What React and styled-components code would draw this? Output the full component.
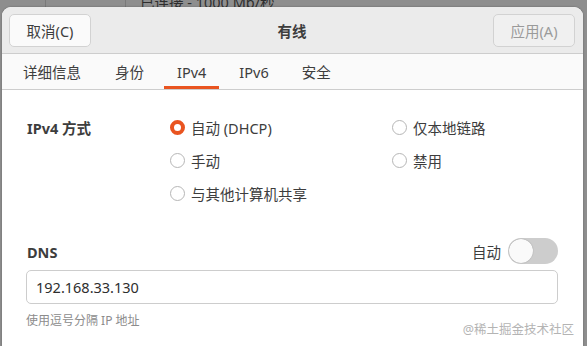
import styled, { createGlobalStyle } from "styled-components";

const GlobalStyle = createGlobalStyle`
  html, body {
    margin: 0;
    padding: 0;
  }
  body {
    font-family: "Noto Sans", "Noto Sans CJK SC", sans-serif;
    color: #3d3d3d;
  }
`;

const Desktop = styled.div`
  position: relative;
  width: 587px;
  height: 346px;
  overflow: hidden;
  background: #8e8e8e;
  padding: 7px 4px 0 2px;
  box-sizing: border-box;
`;

// bits of the window lying behind the dialog
const BehindText = styled.div`
  position: absolute;
  top: -9px;
  left: 140px;
  font-size: 14.5px;
  color: #2e2e2e;
`;

const BehindLine = styled.div`
  position: absolute;
  top: 0;
  left: ${(p) => p.$x}px;
  width: 1px;
  height: 7px;
  background: #7a7a7a;
`;

const Dialog = styled.div`
  position: relative;
  height: 100%;
  display: flex;
  flex-direction: column;
  background: #ffffff;
  border-radius: 9px 9px 0 0;
  overflow: hidden;
  box-shadow: 0 0 2px rgba(0, 0, 0, 0.35);
`;

const Header = styled.div`
  height: 46px;
  display: flex;
  align-items: center;
  justify-content: space-between;
  padding: 0 8px 0 7px;
  background: #ebebeb;
  border-bottom: 1px solid #cdcdcd;
`;

const HeadButton = styled.div`
  width: 82px;
  height: 33px;
  box-sizing: border-box;
  display: flex;
  align-items: center;
  justify-content: center;
  border: 1px solid #d2d2d2;
  border-radius: 5px;
  background: ${(p) => (p.$disabled ? "#f0f0f0" : "#fafafa")};
  color: ${(p) => (p.$disabled ? "#9a9a9a" : "#3d3d3d")};
  font-size: 14.5px;
`;

const Title = styled.div`
  font-size: 14.5px;
  font-weight: bold;
  color: #3d3d3d;
`;

const Tabs = styled.div`
  height: 35px;
  display: flex;
  align-items: stretch;
  padding-left: 7px;
  background: #fafafa;
  border-bottom: 1px solid #cdcdcd;
`;

const Tab = styled.div`
  position: relative;
  display: flex;
  align-items: center;
  padding: 0 ${(p) => p.$pad || 14}px;
  font-size: 14.5px;
  color: #3d3d3d;
  box-shadow: ${(p) => (p.$active ? "inset 0 -3px 0 #e95420" : "none")};
`;

const Content = styled.div`
  flex: 1;
  padding: 26px 25px 0 24px;
  display: flex;
  flex-direction: column;
`;

const MethodRow = styled.div`
  display: grid;
  grid-template-columns: 144px 222px 1fr;
`;

const Label = styled.div`
  font-weight: bold;
  font-size: 14.5px;
  color: #3d3d3d;
  line-height: 22px;
  padding-top: 1px;
  padding-left: 1px;
`;

const RadioCol = styled.div`
  display: flex;
  flex-direction: column;
  gap: 10px;
`;

const RadioRow = styled.div`
  display: flex;
  align-items: center;
  gap: 6px;
  height: 23px;
  font-size: 14.5px;
  color: #3d3d3d;
`;

const RadioDot = styled.span`
  width: 15px;
  height: 15px;
  box-sizing: border-box;
  border-radius: 50%;
  border: ${(p) => (p.$on ? "4px solid #e95420" : "1px solid #b6b6b6")};
  background: #fff;
`;

const DnsHead = styled.div`
  margin-top: 33px;
  display: flex;
  align-items: center;
  justify-content: space-between;
  height: 26px;
`;

const AutoWrap = styled.div`
  display: flex;
  align-items: center;
  gap: 7px;
  font-size: 14.5px;
  color: #3d3d3d;
`;

const Switch = styled.div`
  width: 50px;
  height: 26px;
  border-radius: 13px;
  background: #cdcdcd;
  display: flex;
  align-items: center;
  padding: 1px;
  box-sizing: border-box;
`;

const Knob = styled.span`
  width: 24px;
  height: 24px;
  border-radius: 50%;
  background: #fafafa;
  box-shadow: 0 0 1px rgba(0, 0, 0, 0.4);
`;

const Input = styled.div`
  margin-top: 6px;
  height: 34px;
  box-sizing: border-box;
  border: 1px solid #cdcdcd;
  border-radius: 5px;
  display: flex;
  align-items: center;
  padding-left: 9px;
  font-size: 14.5px;
  color: #2e2e2e;
`;

const Hint = styled.div`
  margin-top: 7px;
  font-size: 12px;
  color: #8c8c8c;
`;

const Watermark = styled.div`
  position: absolute;
  right: 9px;
  bottom: 8px;
  font-size: 12.5px;
  color: #b4b4b4;
`;

export default function App() {
  return (
    <>
      <GlobalStyle />
      <Desktop>
        <BehindLine $x={45} />
        <BehindLine $x={125} />
        <BehindText>已连接 - 1000 Mb/秒</BehindText>
        <Dialog>
          <Header>
            <HeadButton>取消(C)</HeadButton>
            <Title>有线</Title>
            <HeadButton $disabled>应用(A)</HeadButton>
          </Header>
          <Tabs>
            <Tab>详细信息</Tab>
            <Tab $pad={20}>身份</Tab>
            <Tab $active $pad={13}>IPv4</Tab>
            <Tab $pad={20}>IPv6</Tab>
            <Tab $pad={13}>安全</Tab>
          </Tabs>
          <Content>
            <MethodRow>
              <Label>IPv4 方式</Label>
              <RadioCol>
                <RadioRow>
                  <RadioDot $on />
                  自动 (DHCP)
                </RadioRow>
                <RadioRow>
                  <RadioDot />
                  手动
                </RadioRow>
                <RadioRow>
                  <RadioDot />
                  与其他计算机共享
                </RadioRow>
              </RadioCol>
              <RadioCol>
                <RadioRow>
                  <RadioDot />
                  仅本地链路
                </RadioRow>
                <RadioRow>
                  <RadioDot />
                  禁用
                </RadioRow>
              </RadioCol>
            </MethodRow>
            <DnsHead>
              <Label>DNS</Label>
              <AutoWrap>
                自动
                <Switch>
                  <Knob />
                </Switch>
              </AutoWrap>
            </DnsHead>
            <Input>192.168.33.130</Input>
            <Hint>使用逗号分隔 IP 地址</Hint>
          </Content>
          <Watermark>@稀土掘金技术社区</Watermark>
        </Dialog>
      </Desktop>
    </>
  );
}
